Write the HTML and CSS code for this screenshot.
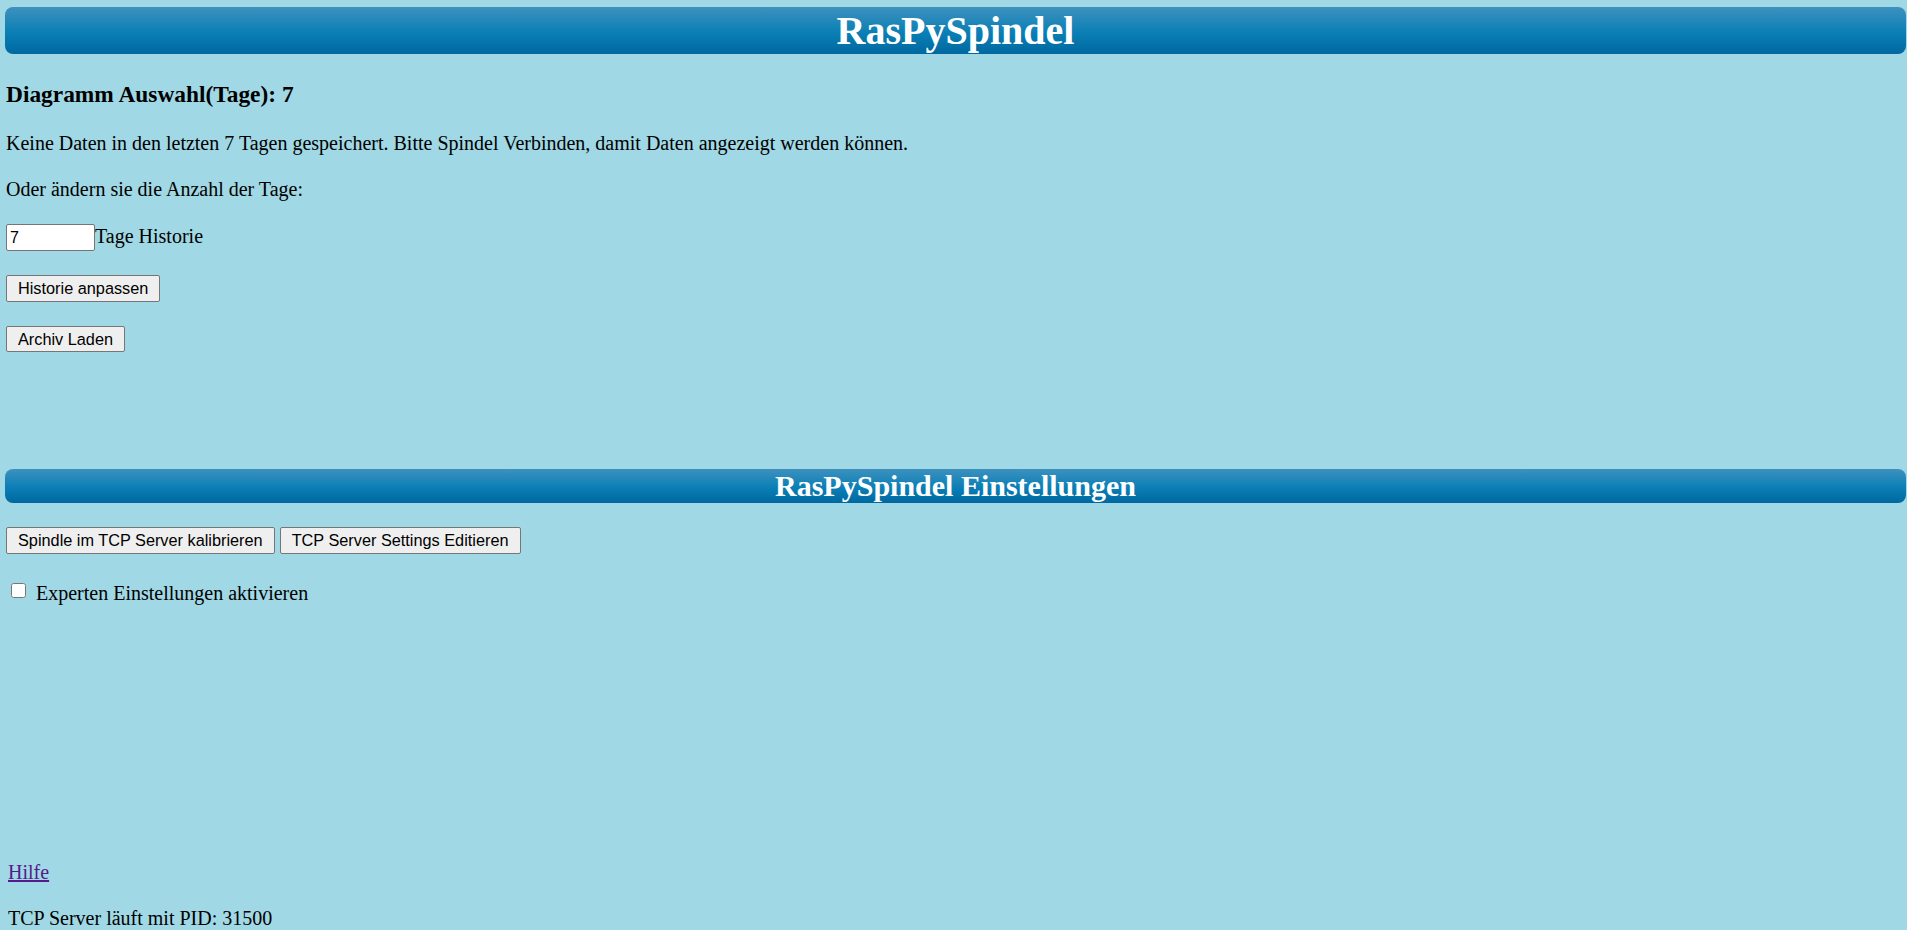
FILE: index.html
```html
<!DOCTYPE html>
<html lang="de">
<head>
<meta charset="utf-8">
<title>RasPySpindel</title>
<link rel="stylesheet" href="styles.css">
</head>
<body>
<div class="page">
  <h1 class="bar bar-main">RasPySpindel</h1>
  <div class="content">
    <h3 class="section-title">Diagramm Auswahl(Tage): 7</h3>
    <p class="text">Keine Daten in den letzten 7 Tagen gespeichert. Bitte Spindel Verbinden, damit Daten angezeigt werden können.</p>
    <p class="text">Oder ändern sie die Anzahl der Tage:</p>
    <div class="row input-row">
      <input class="days" type="text" value="7"><span class="label">Tage Historie</span>
    </div>
    <div class="row"><button class="btn">Historie anpassen</button></div>
    <div class="row"><button class="btn">Archiv Laden</button></div>
    <div class="chart"></div>
  </div>
  <h2 class="bar bar-sub">RasPySpindel Einstellungen</h2>
  <div class="content">
    <div class="row btn-row">
      <button class="btn">Spindle im TCP Server kalibrieren</button>
      <button class="btn">TCP Server Settings Editieren</button>
    </div>
    <div class="row check-row">
      <input class="check" type="checkbox"><span class="check-label">Experten Einstellungen aktivieren</span>
    </div>
  </div>
  <div class="footer">
    <p class="text"><a class="link" href="#hilfe">Hilfe</a></p>
    <p class="text last">TCP Server läuft mit PID: 31500</p>
  </div>
</div>
</body>
</html>
```

FILE: styles.css
```css
html, body {
  margin: 0;
  padding: 0;
}
body {
  background: #a0d8e5;
  color: #000;
  font-family: "Liberation Serif", "Times New Roman", serif;
  font-size: 20px;
  line-height: 22px;
}
.page {
  padding: 7px 1px 0 5px;
}
.bar {
  margin: 0;
  border-radius: 8px;
  background: linear-gradient(to bottom, #3d91be 0%, #0a7fb5 55%, #0068a0 100%);
  color: #fff;
  text-align: center;
  font-weight: bold;
}
.bar-main {
  height: 47px;
  line-height: 47px;
  font-size: 40px;
}
.bar-sub {
  height: 34px;
  line-height: 34px;
  font-size: 30px;
  margin-top: 24px;
}
.content {
  padding-left: 1px;
}
.section-title {
  margin: 27px 0 24px;
  font-size: 23.4px;
  line-height: 27px;
  font-weight: bold;
}
.text {
  margin: 24px 0;
}
.row {
  display: flex;
  margin: 24px 0;
}
.input-row {
  align-items: baseline;
  margin-bottom: 23px;
}
.days {
  box-sizing: border-box;
  width: 89px;
  height: 27px;
  margin: 0;
  padding: 3px 3px;
  border: 1px solid #767676;
  border-radius: 2px;
  background: #fff;
  font-family: "Liberation Sans", Arial, sans-serif;
  font-size: 16px;
  color: #000;
}
.btn {
  box-sizing: border-box;
  height: 26.5px;
  margin: 0;
  padding: 0 11px;
  border: 1px solid #767676;
  border-radius: 2px;
  background: #efefef;
  color: #000;
  font-family: "Liberation Sans", Arial, sans-serif;
  font-size: 16.3px;
  line-height: 18px;
}
.btn-row {
  gap: 5px;
}
.chart {
  height: 69px;
}
.check-row {
  align-items: flex-start;
  margin-bottom: 0;
}
.check {
  width: 15px;
  height: 15px;
  margin: 5px 4px 0 5px;
}
.check-label {
  padding-top: 4.5px;
  padding-left: 6px;
}
.footer {
  padding-left: 3px;
  margin-top: 257px;
}
.link {
  color: #551a8b;
}
.last {
  margin-bottom: 0;
}
```
